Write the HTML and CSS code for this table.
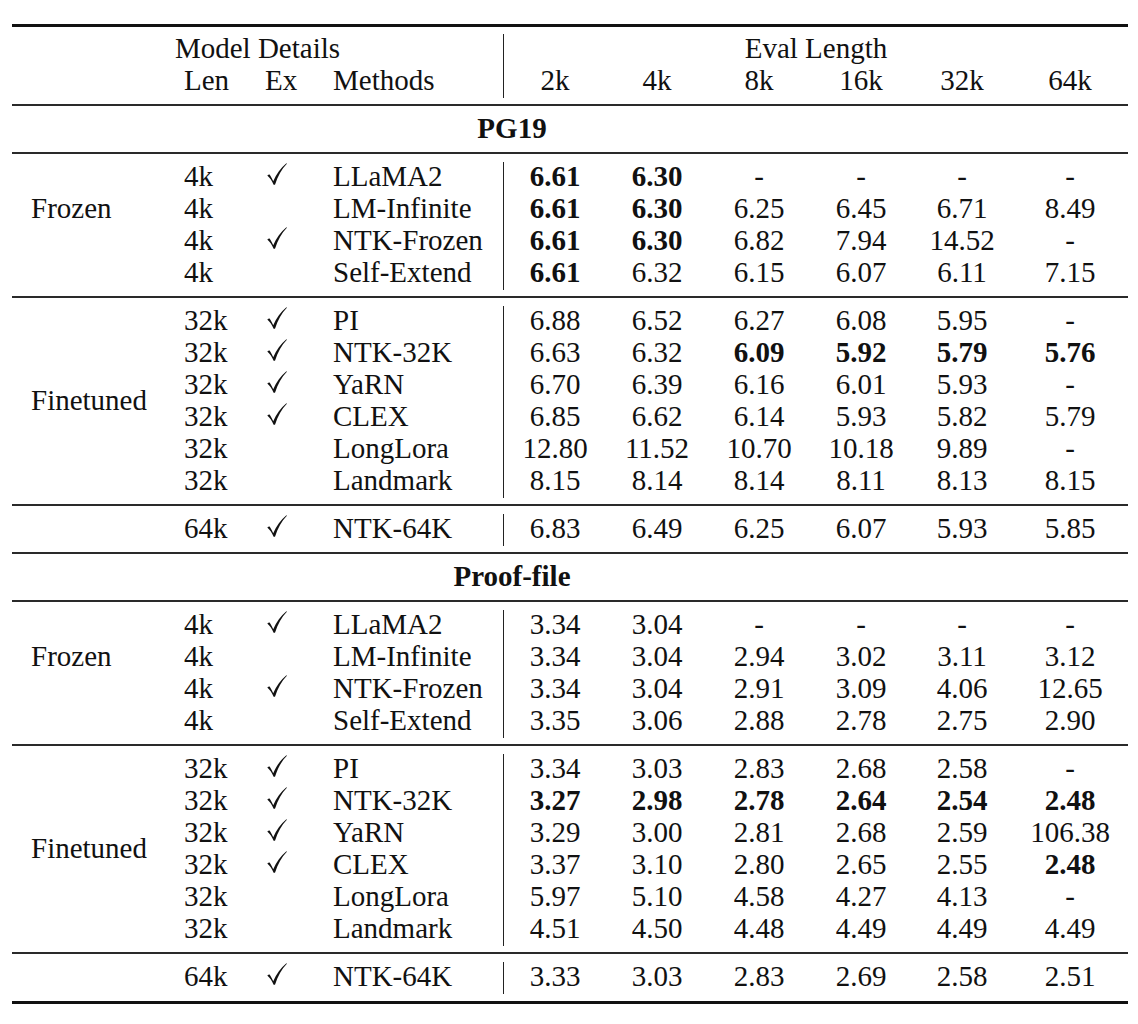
FILE: index.html
```html
<!DOCTYPE html>
<html lang="en">
<head>
<meta charset="utf-8">
<title>Perplexity table</title>
<link rel="stylesheet" href="styles.css">
</head>
<body>
<div class="table">
  <div class="rule-thick rule-top"></div>

  <div class="grid head">
    <div class="span-left">Model Details</div>
    <div class="span-right v">Eval Length</div>
    <div class="len">Len</div><div class="ex">Ex</div><div>Methods</div>
    <div class="num v">2k</div><div class="num">4k</div><div class="num">8k</div><div class="num">16k</div><div class="num">32k</div><div class="num">64k</div>
  </div>

  <div class="rule-mid"></div>
  <div class="grid"><div class="title">PG19</div></div>
  <div class="rule-mid"></div>

  <div class="grid">
    <div class="g frozen">Frozen</div>
    <div class="len">4k</div><div class="ex"><svg class="ck" viewBox="0 0 20 22"><path d="M0.3,12.6 C1.2,11.8 2,11.4 2.6,11.6 C3.6,13.2 4.8,15.4 6.2,18.2 C9.4,11 13.8,4.6 19.4,0.2 L19.9,0.8 C14.6,6 10.8,13 8,21.8 L6.6,21.8 C5,18 3,15 0.3,12.6 Z"/></svg></div><div>LLaMA2</div>
    <div class="num v b">6.61</div><div class="num b">6.30</div><div class="num">-</div><div class="num">-</div><div class="num">-</div><div class="num">-</div>
    <div class="len">4k</div><div class="ex"></div><div>LM-Infinite</div>
    <div class="num v b">6.61</div><div class="num b">6.30</div><div class="num">6.25</div><div class="num">6.45</div><div class="num">6.71</div><div class="num">8.49</div>
    <div class="len">4k</div><div class="ex"><svg class="ck" viewBox="0 0 20 22"><path d="M0.3,12.6 C1.2,11.8 2,11.4 2.6,11.6 C3.6,13.2 4.8,15.4 6.2,18.2 C9.4,11 13.8,4.6 19.4,0.2 L19.9,0.8 C14.6,6 10.8,13 8,21.8 L6.6,21.8 C5,18 3,15 0.3,12.6 Z"/></svg></div><div>NTK-Frozen</div>
    <div class="num v b">6.61</div><div class="num b">6.30</div><div class="num">6.82</div><div class="num">7.94</div><div class="num">14.52</div><div class="num">-</div>
    <div class="len">4k</div><div class="ex"></div><div>Self-Extend</div>
    <div class="num v b">6.61</div><div class="num">6.32</div><div class="num">6.15</div><div class="num">6.07</div><div class="num">6.11</div><div class="num">7.15</div>
  </div>

  <div class="rule-mid"></div>

  <div class="grid">
    <div class="g finetuned">Finetuned</div>
    <div class="len">32k</div><div class="ex"><svg class="ck" viewBox="0 0 20 22"><path d="M0.3,12.6 C1.2,11.8 2,11.4 2.6,11.6 C3.6,13.2 4.8,15.4 6.2,18.2 C9.4,11 13.8,4.6 19.4,0.2 L19.9,0.8 C14.6,6 10.8,13 8,21.8 L6.6,21.8 C5,18 3,15 0.3,12.6 Z"/></svg></div><div>PI</div>
    <div class="num v">6.88</div><div class="num">6.52</div><div class="num">6.27</div><div class="num">6.08</div><div class="num">5.95</div><div class="num">-</div>
    <div class="len">32k</div><div class="ex"><svg class="ck" viewBox="0 0 20 22"><path d="M0.3,12.6 C1.2,11.8 2,11.4 2.6,11.6 C3.6,13.2 4.8,15.4 6.2,18.2 C9.4,11 13.8,4.6 19.4,0.2 L19.9,0.8 C14.6,6 10.8,13 8,21.8 L6.6,21.8 C5,18 3,15 0.3,12.6 Z"/></svg></div><div>NTK-32K</div>
    <div class="num v">6.63</div><div class="num">6.32</div><div class="num b">6.09</div><div class="num b">5.92</div><div class="num b">5.79</div><div class="num b">5.76</div>
    <div class="len">32k</div><div class="ex"><svg class="ck" viewBox="0 0 20 22"><path d="M0.3,12.6 C1.2,11.8 2,11.4 2.6,11.6 C3.6,13.2 4.8,15.4 6.2,18.2 C9.4,11 13.8,4.6 19.4,0.2 L19.9,0.8 C14.6,6 10.8,13 8,21.8 L6.6,21.8 C5,18 3,15 0.3,12.6 Z"/></svg></div><div>YaRN</div>
    <div class="num v">6.70</div><div class="num">6.39</div><div class="num">6.16</div><div class="num">6.01</div><div class="num">5.93</div><div class="num">-</div>
    <div class="len">32k</div><div class="ex"><svg class="ck" viewBox="0 0 20 22"><path d="M0.3,12.6 C1.2,11.8 2,11.4 2.6,11.6 C3.6,13.2 4.8,15.4 6.2,18.2 C9.4,11 13.8,4.6 19.4,0.2 L19.9,0.8 C14.6,6 10.8,13 8,21.8 L6.6,21.8 C5,18 3,15 0.3,12.6 Z"/></svg></div><div>CLEX</div>
    <div class="num v">6.85</div><div class="num">6.62</div><div class="num">6.14</div><div class="num">5.93</div><div class="num">5.82</div><div class="num">5.79</div>
    <div class="len">32k</div><div class="ex"></div><div>LongLora</div>
    <div class="num v">12.80</div><div class="num">11.52</div><div class="num">10.70</div><div class="num">10.18</div><div class="num">9.89</div><div class="num">-</div>
    <div class="len">32k</div><div class="ex"></div><div>Landmark</div>
    <div class="num v">8.15</div><div class="num">8.14</div><div class="num">8.14</div><div class="num">8.11</div><div class="num">8.13</div><div class="num">8.15</div>
  </div>

  <div class="rule-mid"></div>

  <div class="grid">
    <div class="len">64k</div><div class="ex"><svg class="ck" viewBox="0 0 20 22"><path d="M0.3,12.6 C1.2,11.8 2,11.4 2.6,11.6 C3.6,13.2 4.8,15.4 6.2,18.2 C9.4,11 13.8,4.6 19.4,0.2 L19.9,0.8 C14.6,6 10.8,13 8,21.8 L6.6,21.8 C5,18 3,15 0.3,12.6 Z"/></svg></div><div>NTK-64K</div>
    <div class="num v">6.83</div><div class="num">6.49</div><div class="num">6.25</div><div class="num">6.07</div><div class="num">5.93</div><div class="num">5.85</div>
  </div>

  <div class="rule-mid"></div>
  <div class="grid"><div class="title">Proof-file</div></div>
  <div class="rule-mid"></div>

  <div class="grid">
    <div class="g frozen">Frozen</div>
    <div class="len">4k</div><div class="ex"><svg class="ck" viewBox="0 0 20 22"><path d="M0.3,12.6 C1.2,11.8 2,11.4 2.6,11.6 C3.6,13.2 4.8,15.4 6.2,18.2 C9.4,11 13.8,4.6 19.4,0.2 L19.9,0.8 C14.6,6 10.8,13 8,21.8 L6.6,21.8 C5,18 3,15 0.3,12.6 Z"/></svg></div><div>LLaMA2</div>
    <div class="num v">3.34</div><div class="num">3.04</div><div class="num">-</div><div class="num">-</div><div class="num">-</div><div class="num">-</div>
    <div class="len">4k</div><div class="ex"></div><div>LM-Infinite</div>
    <div class="num v">3.34</div><div class="num">3.04</div><div class="num">2.94</div><div class="num">3.02</div><div class="num">3.11</div><div class="num">3.12</div>
    <div class="len">4k</div><div class="ex"><svg class="ck" viewBox="0 0 20 22"><path d="M0.3,12.6 C1.2,11.8 2,11.4 2.6,11.6 C3.6,13.2 4.8,15.4 6.2,18.2 C9.4,11 13.8,4.6 19.4,0.2 L19.9,0.8 C14.6,6 10.8,13 8,21.8 L6.6,21.8 C5,18 3,15 0.3,12.6 Z"/></svg></div><div>NTK-Frozen</div>
    <div class="num v">3.34</div><div class="num">3.04</div><div class="num">2.91</div><div class="num">3.09</div><div class="num">4.06</div><div class="num">12.65</div>
    <div class="len">4k</div><div class="ex"></div><div>Self-Extend</div>
    <div class="num v">3.35</div><div class="num">3.06</div><div class="num">2.88</div><div class="num">2.78</div><div class="num">2.75</div><div class="num">2.90</div>
  </div>

  <div class="rule-mid"></div>

  <div class="grid">
    <div class="g finetuned">Finetuned</div>
    <div class="len">32k</div><div class="ex"><svg class="ck" viewBox="0 0 20 22"><path d="M0.3,12.6 C1.2,11.8 2,11.4 2.6,11.6 C3.6,13.2 4.8,15.4 6.2,18.2 C9.4,11 13.8,4.6 19.4,0.2 L19.9,0.8 C14.6,6 10.8,13 8,21.8 L6.6,21.8 C5,18 3,15 0.3,12.6 Z"/></svg></div><div>PI</div>
    <div class="num v">3.34</div><div class="num">3.03</div><div class="num">2.83</div><div class="num">2.68</div><div class="num">2.58</div><div class="num">-</div>
    <div class="len">32k</div><div class="ex"><svg class="ck" viewBox="0 0 20 22"><path d="M0.3,12.6 C1.2,11.8 2,11.4 2.6,11.6 C3.6,13.2 4.8,15.4 6.2,18.2 C9.4,11 13.8,4.6 19.4,0.2 L19.9,0.8 C14.6,6 10.8,13 8,21.8 L6.6,21.8 C5,18 3,15 0.3,12.6 Z"/></svg></div><div>NTK-32K</div>
    <div class="num v b">3.27</div><div class="num b">2.98</div><div class="num b">2.78</div><div class="num b">2.64</div><div class="num b">2.54</div><div class="num b">2.48</div>
    <div class="len">32k</div><div class="ex"><svg class="ck" viewBox="0 0 20 22"><path d="M0.3,12.6 C1.2,11.8 2,11.4 2.6,11.6 C3.6,13.2 4.8,15.4 6.2,18.2 C9.4,11 13.8,4.6 19.4,0.2 L19.9,0.8 C14.6,6 10.8,13 8,21.8 L6.6,21.8 C5,18 3,15 0.3,12.6 Z"/></svg></div><div>YaRN</div>
    <div class="num v">3.29</div><div class="num">3.00</div><div class="num">2.81</div><div class="num">2.68</div><div class="num">2.59</div><div class="num">106.38</div>
    <div class="len">32k</div><div class="ex"><svg class="ck" viewBox="0 0 20 22"><path d="M0.3,12.6 C1.2,11.8 2,11.4 2.6,11.6 C3.6,13.2 4.8,15.4 6.2,18.2 C9.4,11 13.8,4.6 19.4,0.2 L19.9,0.8 C14.6,6 10.8,13 8,21.8 L6.6,21.8 C5,18 3,15 0.3,12.6 Z"/></svg></div><div>CLEX</div>
    <div class="num v">3.37</div><div class="num">3.10</div><div class="num">2.80</div><div class="num">2.65</div><div class="num">2.55</div><div class="num b">2.48</div>
    <div class="len">32k</div><div class="ex"></div><div>LongLora</div>
    <div class="num v">5.97</div><div class="num">5.10</div><div class="num">4.58</div><div class="num">4.27</div><div class="num">4.13</div><div class="num">-</div>
    <div class="len">32k</div><div class="ex"></div><div>Landmark</div>
    <div class="num v">4.51</div><div class="num">4.50</div><div class="num">4.48</div><div class="num">4.49</div><div class="num">4.49</div><div class="num">4.49</div>
  </div>

  <div class="rule-mid"></div>

  <div class="grid">
    <div class="len">64k</div><div class="ex"><svg class="ck" viewBox="0 0 20 22"><path d="M0.3,12.6 C1.2,11.8 2,11.4 2.6,11.6 C3.6,13.2 4.8,15.4 6.2,18.2 C9.4,11 13.8,4.6 19.4,0.2 L19.9,0.8 C14.6,6 10.8,13 8,21.8 L6.6,21.8 C5,18 3,15 0.3,12.6 Z"/></svg></div><div>NTK-64K</div>
    <div class="num v">3.33</div><div class="num">3.03</div><div class="num">2.83</div><div class="num">2.69</div><div class="num">2.58</div><div class="num">2.51</div>
  </div>

  <div class="rule-thick rule-bottom"></div>
</div>
</body>
</html>
```

FILE: styles.css
```css
html, body {
  margin: 0;
  padding: 0;
  background: #ffffff;
}

body {
  font-family: "Liberation Serif", "Times New Roman", serif;
  font-size: 29px;
  color: #111111;
}

.table {
  margin-left: 12px;
  width: 1116px;
  padding-top: 24px;
}

.rule-thick {
  height: 3px;
  background: #111111;
}

.rule-top {
  margin-bottom: 7px;
}

.rule-bottom {
  margin-top: 7px;
}

.rule-mid {
  height: 2px;
  background: #2a2a2a;
  margin: 6px 0 8px;
}

.grid {
  display: grid;
  grid-template-columns: 172px 81px 68px 170px 103px 102px 102px 102px 100px 116px;
  grid-auto-rows: 32px;
  line-height: 28px;
  white-space: nowrap;
}

.span-left {
  grid-column: 1 / 5;
  text-align: center;
}

.span-right {
  grid-column: 5 / 11;
  text-align: center;
}

.title {
  grid-column: 1 / 10;
  text-align: center;
  font-weight: bold;
}

.g {
  grid-column: 1;
  padding-left: 19px;
}

.frozen {
  grid-row: 2;
}

.finetuned {
  grid-row: 3 / 5;
  align-self: center;
  padding-bottom: 4px;
}

.len {
  grid-column: 2;
}

.ex {
  grid-column: 3;
}

.ex .ck {
  display: block;
  width: 20px;
  height: 22px;
  margin: 1px 0 0 2px;
  fill: #111111;
}

.num {
  text-align: center;
}

.v {
  border-left: 1px solid #222222;
}

.b {
  font-weight: bold;
}
```
